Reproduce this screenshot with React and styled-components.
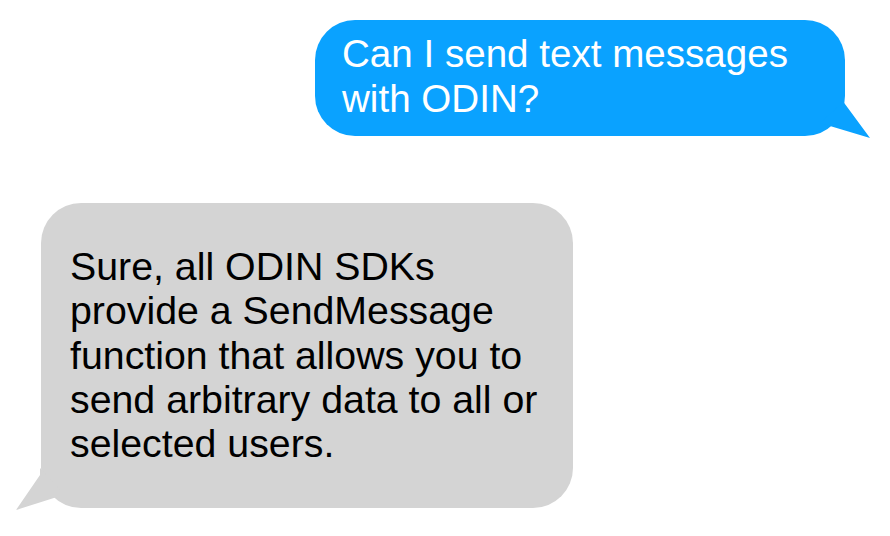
import React from 'react';
import styled, { createGlobalStyle } from 'styled-components';

const GlobalStyle = createGlobalStyle`
body {
  margin: 0;
  background: #ffffff;
  font-family: "Liberation Sans", Arial, Helvetica, sans-serif;
}
`

const Thread = styled.div`
width: 890px;
height: 536px;
box-sizing: border-box;
padding: 20px 45px 0 41px;
display: flex;
flex-direction: column;
gap: 67px;
overflow: hidden;
`

const Bubble = styled.div`
position: relative;
box-sizing: border-box;
width: ${props => props.$w}px;
height: ${props => props.$h}px;
padding: ${props => props.$pad};
border-radius: 40px;
font-size: ${props => props.$fs}px;
line-height: ${props => props.$lh}px;
white-space: nowrap;
align-self: ${props => props.$out ? "flex-end" : "flex-start"};
background-color: ${props => props.$out ? "#0aa2ff" : "#d4d4d4"};
color: ${props => props.$out ? "#ffffff" : "#000000"};

&::after {
  content: "";
  position: absolute;
  background-color: inherit;
  ${props => props.$out ? `
    left: 505px;
    top: 80px;
    width: 52px;
    height: 40px;
    clip-path: polygon(0px 23px, 20px 5px, 22px 0px, 50px 38px);
  ` : `
    left: -26px;
    top: 265px;
    width: 50px;
    height: 44px;
    clip-path: polygon(1px 42px, 25px 7px, 25px 0px, 48px 25px, 42px 29px);
  `}
}
`

const App = () => {
  return (
    <>
      <GlobalStyle />
      <Thread>
        <Bubble $out $w={530} $h={116} $fs={38.6} $lh={45} $pad="11px 20px 14px 27px">
          Can I send text messages<br />with ODIN?
        </Bubble>
        <Bubble $w={532} $h={305} $fs={39.3} $lh={44.25} $pad="41px 20px 42px 29px">
          Sure, all ODIN SDKs<br />
          provide a SendMessage<br />
          function that allows you to<br />
          send arbitrary data to all or<br />
          selected users.
        </Bubble>
      </Thread>
    </>
  )
}

export default App;
